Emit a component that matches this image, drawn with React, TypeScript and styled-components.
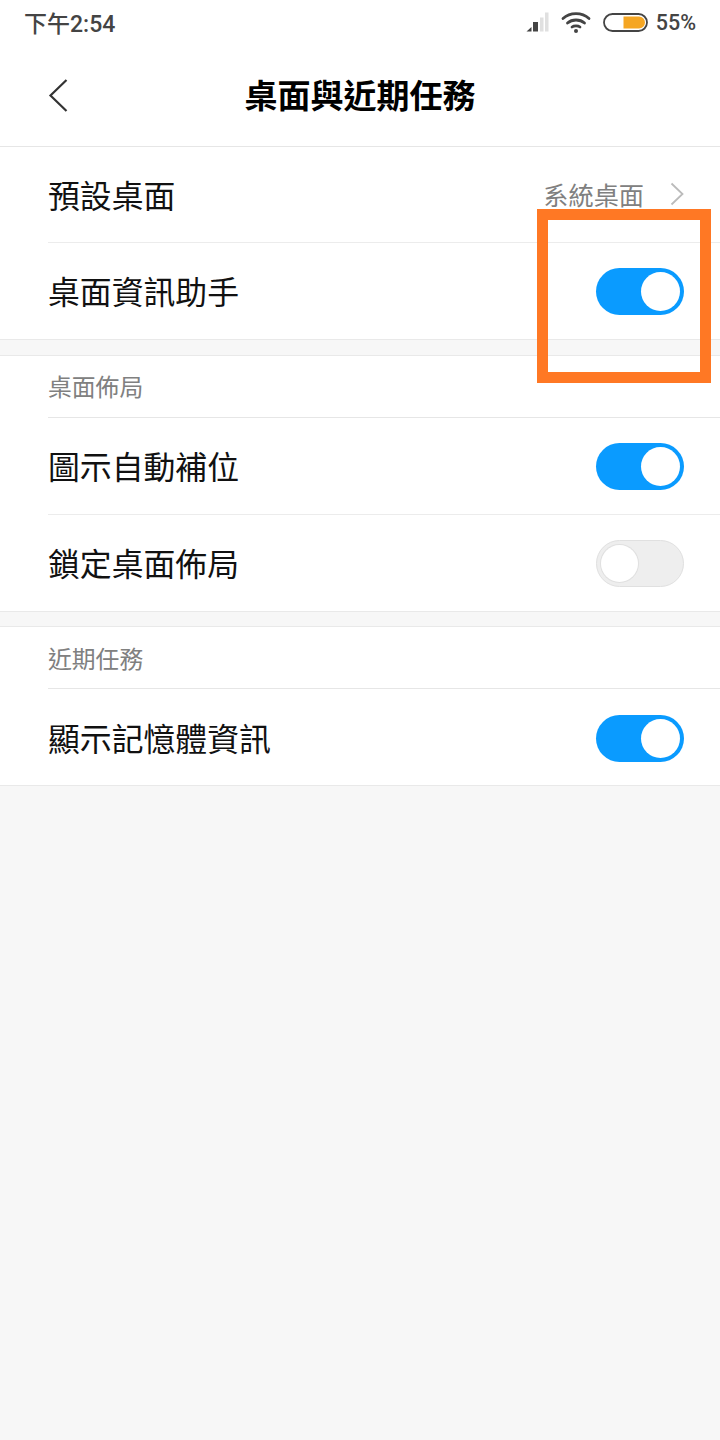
import styled, { createGlobalStyle } from "styled-components";

const GlobalStyle = createGlobalStyle`
    html, body {
        margin: 0;
        padding: 0;
        background: #f7f7f7;
    }
    body {
        font-family: "Roboto", "Noto Sans CJK TC", sans-serif;
    }
`;

const Page = styled.div`
    position: relative;
    width: 720px;
    height: 1440px;
    overflow: hidden;
    background: #f7f7f7;
`;

const StatusBar = styled.div`
    height: 44px;
    padding: 0 24px;
    display: flex;
    align-items: center;
    justify-content: space-between;
    background: #fff;
    color: #444;
    font-size: 23px;
    font-weight: 500;
`;

const StatusIcons = styled.div`
    display: flex;
    align-items: center;
`;

const Percent = styled.span`
    margin-left: 8px;
    font-size: 21.5px;
`;

const Header = styled.header`
    height: 102px;
    position: relative;
    display: flex;
    align-items: center;
    justify-content: center;
    background: #fff;
    border-bottom: 1px solid #e6e6e6;
`;

const BackIcon = styled.svg`
    position: absolute;
    left: 48px;
    top: 35px;
`;

const Title = styled.h1`
    margin: 0 0 2px;
    font-size: 33px;
    font-weight: 700;
    color: #000;
`;

const Group = styled.section`
    background: #fff;
    border-bottom: 1px solid #e9e9e9;
`;

const Gap = styled.div<{ $short?: boolean }>`
    height: ${(p) => (p.$short ? "14px" : "15px")};
    background: #f7f7f7;
    border-bottom: 1px solid #e9e9e9;
`;

const Row = styled.div<{ $last?: boolean; $tall?: boolean; $low?: boolean }>`
    height: ${(p) => (p.$tall ? "97px" : "96px")};
    margin-left: 48px;
    padding-right: 36px;
    padding-top: ${(p) => (p.$low ? "2px" : "0")};
    display: flex;
    align-items: center;
    justify-content: space-between;
    box-sizing: border-box;
    border-bottom: ${(p) => (p.$last ? "none" : "1px solid #ececec")};
`;

const Label = styled.span`
    padding-bottom: 2px;
    font-size: 31.85px;
    color: #111;
`;

const SectionTitle = styled.div<{ $low?: boolean }>`
    height: 62px;
    margin-left: 48px;
    padding-bottom: ${(p) => (p.$low ? "0" : "2px")};
    display: flex;
    align-items: center;
    box-sizing: border-box;
    border-bottom: 1px solid #e6e6e6;
    font-size: 23.8px;
    color: #808080;
`;

const Value = styled.div`
    display: flex;
    align-items: center;
    gap: 26px;
    padding-bottom: 2px;
    font-size: 25.2px;
    color: #808080;
`;

const Switch = styled.div<{ $on?: boolean }>`
    width: 88px;
    height: 47px;
    padding: 4px;
    box-sizing: border-box;
    border-radius: 24px;
    display: flex;
    justify-content: ${(p) => (p.$on ? "flex-end" : "flex-start")};
    background: ${(p) => (p.$on ? "#0a9bff" : "#eeeeee")};
    border: ${(p) => (p.$on ? "none" : "1px solid #e0e0e0")};
`;

const Knob = styled.div<{ $on?: boolean }>`
    width: ${(p) => (p.$on ? "39px" : "37px")};
    height: ${(p) => (p.$on ? "39px" : "37px")};
    border-radius: 50%;
    background: #fff;
    box-shadow: ${(p) => (p.$on ? "none" : "0 0 0 1px #e0e0e0")};
`;

const Highlight = styled.div`
    position: absolute;
    left: 537px;
    top: 209px;
    width: 174px;
    height: 174px;
    box-sizing: border-box;
    border: 11px solid #ff7824;
`;

function Toggle({ on }: { on?: boolean }) {
    return (
        <Switch $on={on}>
            <Knob $on={on} />
        </Switch>
    );
}

function App() {
    return (
        <Page>
            <GlobalStyle />
            <StatusBar>
                <span>下午2:54</span>
                <StatusIcons>
                    <svg width="23" height="20" viewBox="0 0 23 20">
                        <path d="M0.5 19.5 L5.5 15 V19.5 Z" fill="#444" />
                        <rect x="7" y="10" width="5" height="9.5" fill="#444" />
                        <rect x="14" y="5.5" width="3.5" height="14" fill="#e0e0e0" />
                        <rect x="19" y="0.5" width="3.5" height="19" fill="#e0e0e0" />
                    </svg>
                    <svg width="30" height="22" viewBox="0 0 30 22" style={{ marginLeft: 12 }}>
                        <g fill="none" stroke="#444" strokeWidth="2.8" strokeLinecap="round">
                            <path d="M2 7.5 C9 1 21 1 28 7.5" />
                            <path d="M6.5 12 C11 8 19 8 23.5 12" />
                            <path d="M11 16 C13 14.5 17 14.5 19 16" />
                        </g>
                        <circle cx="15" cy="20" r="2" fill="#444" />
                    </svg>
                    <svg width="45" height="19" viewBox="0 0 45 19" style={{ marginLeft: 12 }}>
                        <rect x="1" y="1" width="43" height="17" rx="8.5" fill="#fff" stroke="#444" strokeWidth="1.8" />
                        <path d="M20.5 3.5 H36 A6 6 0 0 1 36 15.5 H20.5 Z" fill="#f5a623" />
                    </svg>
                    <Percent>55%</Percent>
                </StatusIcons>
            </StatusBar>
            <Header>
                <BackIcon width="20" height="34" viewBox="0 0 20 34">
                    <path d="M18.5 1 L2.5 16.5 L18.5 32" fill="none" stroke="#333" strokeWidth="2.2" />
                </BackIcon>
                <Title>桌面與近期任務</Title>
            </Header>
            <Group>
                <Row>
                    <Label>預設桌面</Label>
                    <Value>
                        系統桌面
                        <svg width="14" height="24" viewBox="0 0 14 24">
                            <path d="M1.5 1.5 L12.5 12 L1.5 22.5" fill="none" stroke="#bbb" strokeWidth="1.8" />
                        </svg>
                    </Value>
                </Row>
                <Row $last>
                    <Label>桌面資訊助手</Label>
                    <Toggle on />
                </Row>
            </Group>
            <Gap />
            <Group>
                <SectionTitle>桌面佈局</SectionTitle>
                <Row $tall>
                    <Label>圖示自動補位</Label>
                    <Toggle on />
                </Row>
                <Row $last>
                    <Label>鎖定桌面佈局</Label>
                    <Toggle />
                </Row>
            </Group>
            <Gap $short />
            <Group>
                <SectionTitle $low>近期任務</SectionTitle>
                <Row $last $low>
                    <Label>顯示記憶體資訊</Label>
                    <Toggle on />
                </Row>
            </Group>
            <Highlight />
        </Page>
    );
}

export default App;
